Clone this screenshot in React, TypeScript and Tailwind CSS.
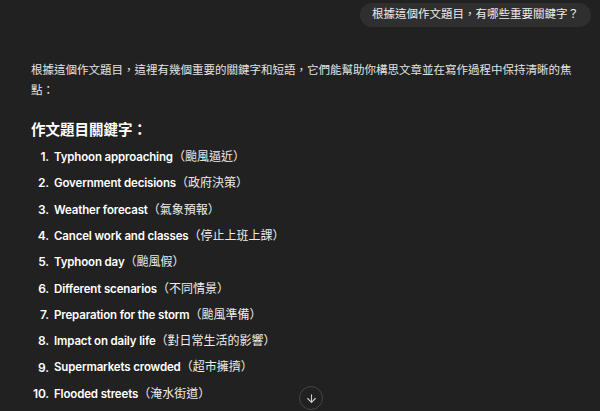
import React from 'react';
import { ArrowDown } from 'lucide-react';

const keywords = [
  { en: 'Typhoon approaching', zh: '（颱風逼近）' },
  { en: 'Government decisions', zh: '（政府決策）' },
  { en: 'Weather forecast', zh: '（氣象預報）' },
  { en: 'Cancel work and classes', zh: '（停止上班上課）' },
  { en: 'Typhoon day', zh: '（颱風假）' },
  { en: 'Different scenarios', zh: '（不同情景）' },
  { en: 'Preparation for the storm', zh: '（颱風準備）' },
  { en: 'Impact on daily life', zh: '（對日常生活的影響）' },
  { en: 'Supermarkets crowded', zh: '（超市擁擠）' },
  { en: 'Flooded streets', zh: '（淹水街道）' },
];

const App = () => {
  return (
    <div className="relative w-[600px] h-[411px] overflow-hidden bg-[#212121] text-[#ececec] font-['Inter','Noto_Sans_CJK_TC',sans-serif]">
      {/* user message */}
      <div className="flex justify-end pt-[3px] pr-[9px]">
        <div className="rounded-full bg-[#2f2f2f] px-[12px] h-[24px] flex items-center text-[11.5px] leading-none">
          根據這個作文題目，有哪些重要關鍵字？
        </div>
      </div>

      {/* assistant answer */}
      <div className="pl-[31px]">
        <p className="mt-[33px] w-[550px] text-[11.5px] leading-[20px] text-[#e3e3e3]">
          根據這個作文題目，這裡有幾個重要的關鍵字和短語，它們能幫助你構思文章並在寫作過程中保持清晰的焦點：
        </p>
        <h3 className="mt-[18px] text-[14.5px] leading-[24px] font-bold text-white">作文題目關鍵字：</h3>
        <ol className="mt-[2px]">
          {keywords.map((k, i) => (
            <li key={i} className="flex h-[26.3px] items-center text-[11.5px] font-semibold tracking-[-0.15px] text-white">
              <span className="w-[23px] -ml-[5px] text-right text-[12px]">{i + 1}.</span>
              <span className="ml-[5px]">
                {k.en}
                <span className="font-normal text-[12px] tracking-normal text-[#ececec]">{k.zh}</span>
              </span>
            </li>
          ))}
        </ol>
      </div>

      {/* scroll to bottom */}
      <div className="absolute left-[299px] top-[386px] w-[24px] h-[24px] rounded-full border border-[#454545] bg-[#212121] flex items-center justify-center">
        <ArrowDown className="w-[13px] h-[13px] text-[#d0d0d0]" strokeWidth={2} />
      </div>
    </div>
  );
};

export default App;
